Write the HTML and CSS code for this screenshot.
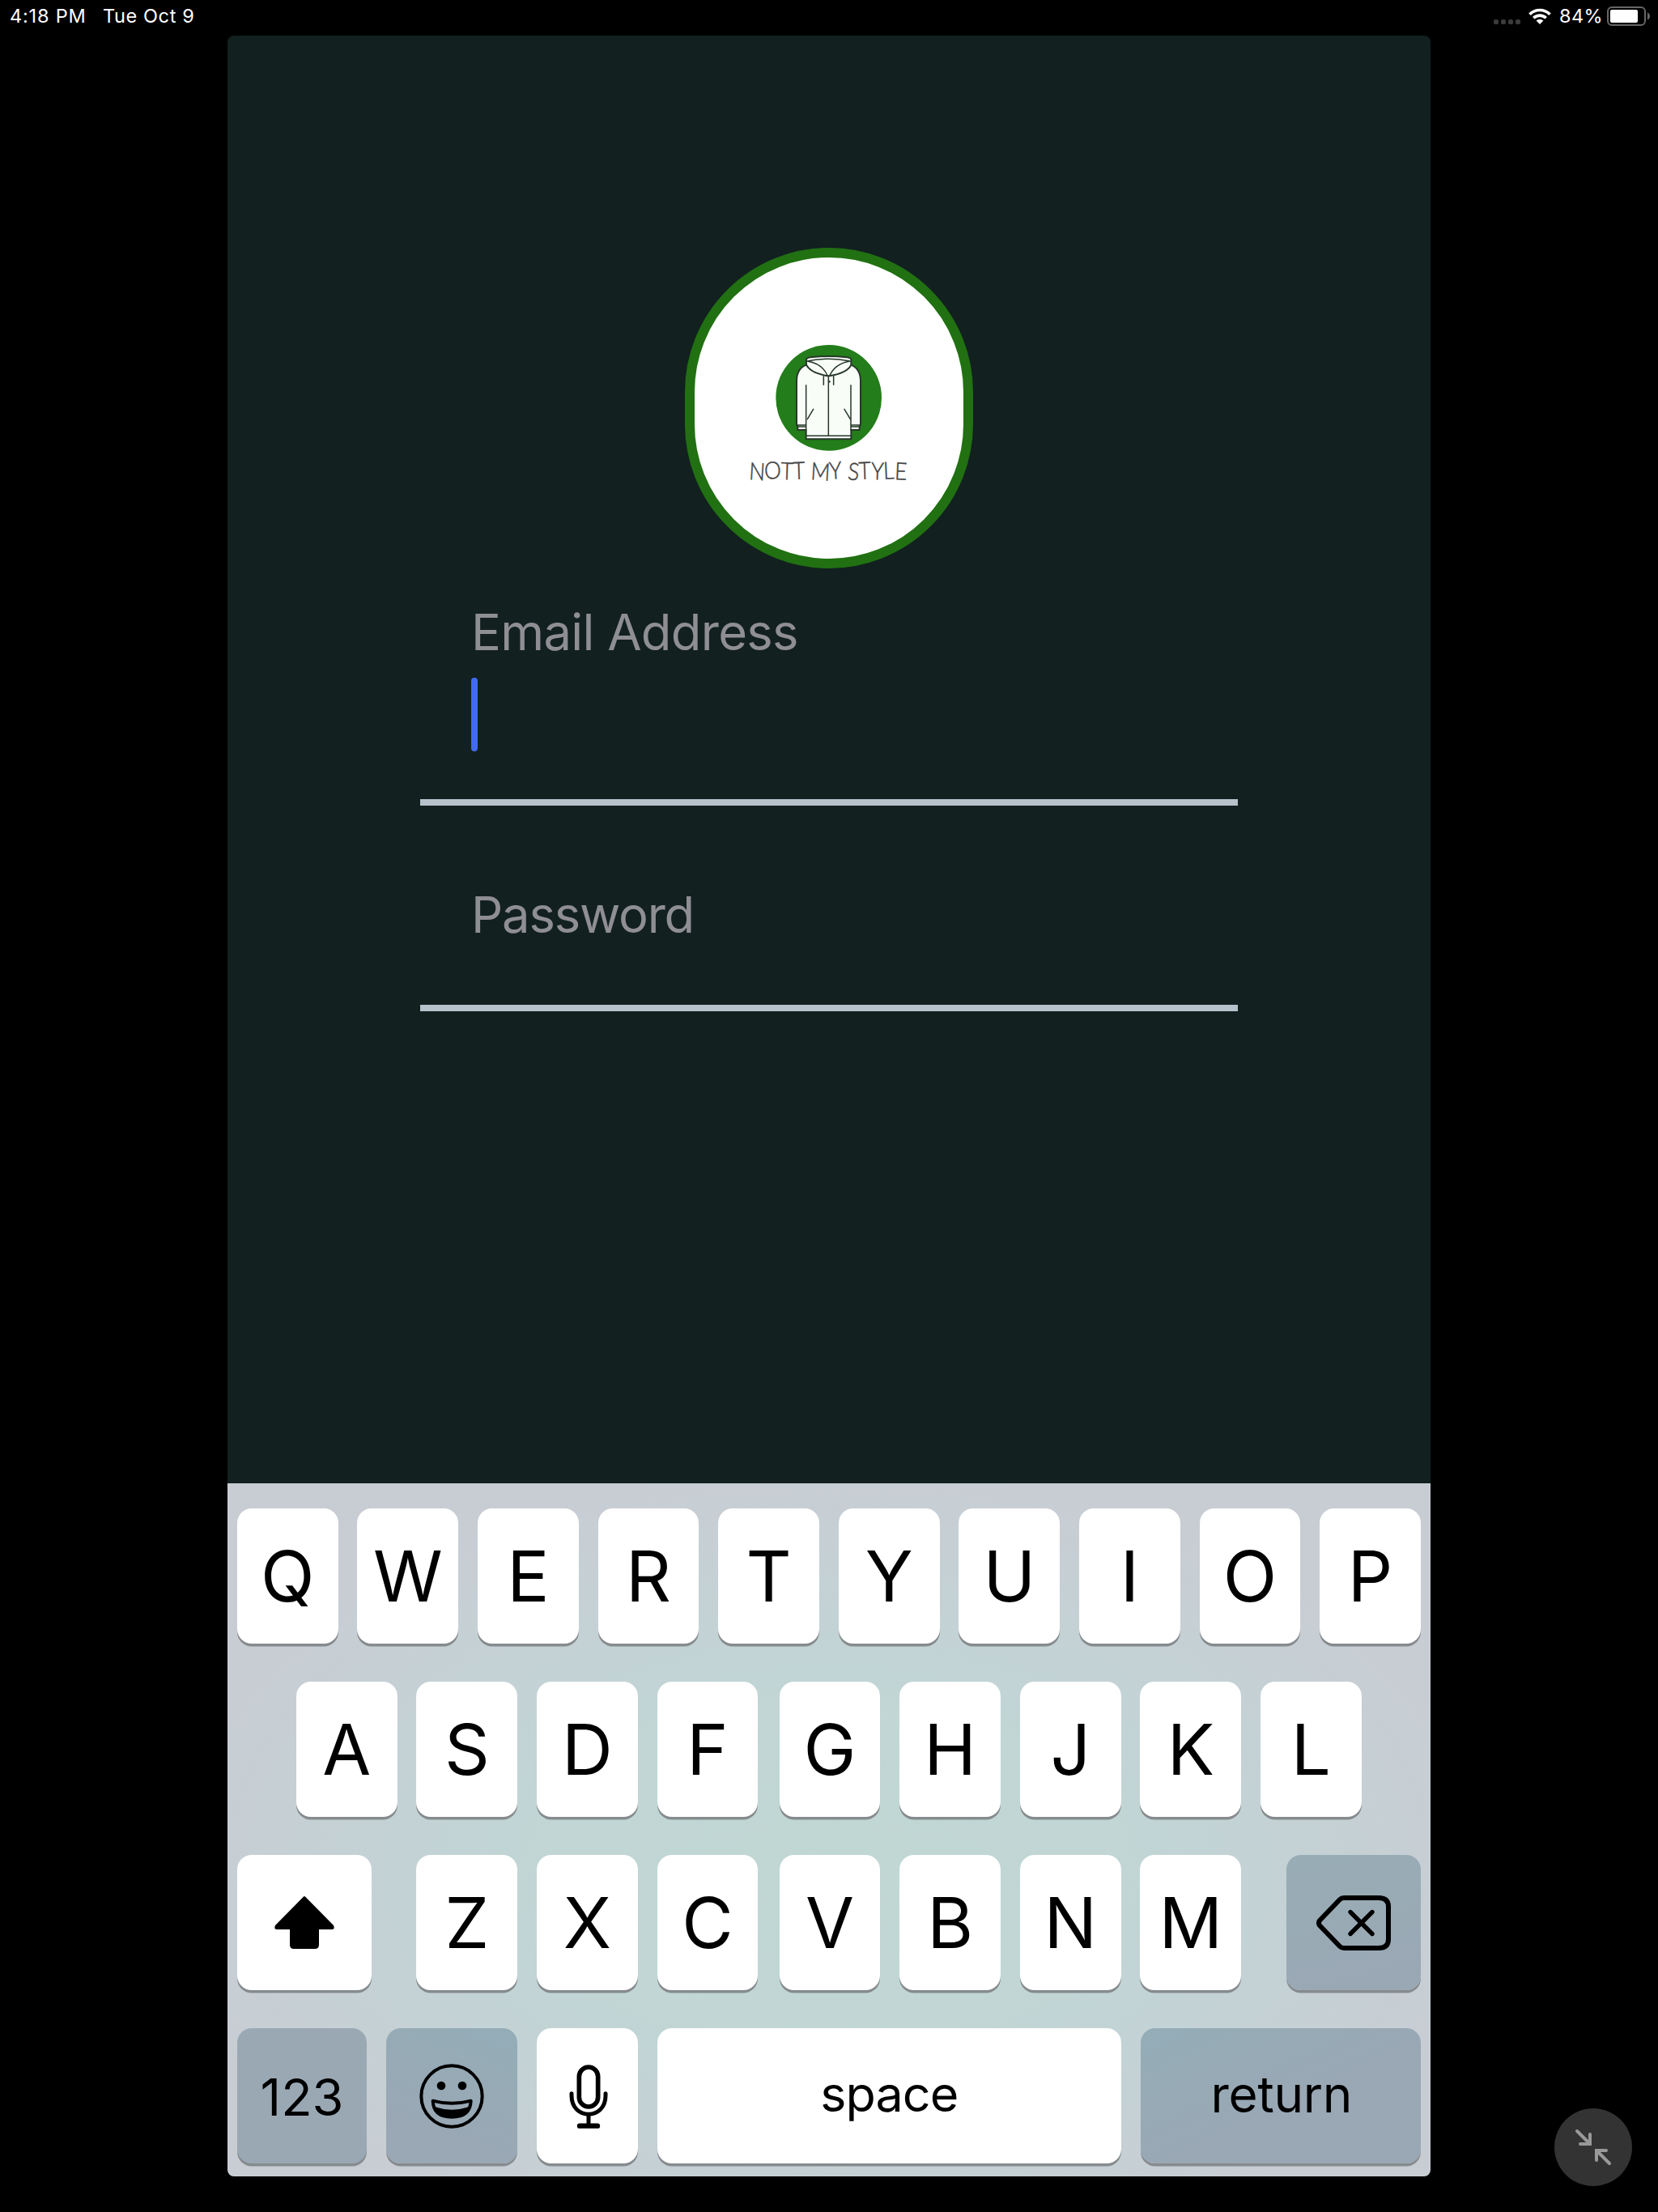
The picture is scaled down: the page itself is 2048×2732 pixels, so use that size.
FILE: index.html
```html
<!DOCTYPE html>
<html lang="en">
<head>
<meta charset="utf-8">
<title>Nott My Style</title>
<link rel="stylesheet" href="styles.css">
</head>
<body>
<header class="status">
  <span class="time">4:18 PM</span>
  <span class="date">Tue Oct 9</span>
  <svg class="signal" viewBox="0 0 33 6" width="33" height="6"><rect width="6" height="6" rx="2"/><rect x="9" width="6" height="6" rx="2"/><rect x="18" width="6" height="6" rx="2"/><rect x="27" width="6" height="6" rx="2"/></svg>
  <svg class="wifi" viewBox="0 0 28 20" width="28" height="20">
    <path d="M1.5 7.7A17.6 17.6 0 0 1 26.500 7.700M6.300 12.300A10.900 10.900 0 0 1 21.700 12.300" fill="none" stroke="#fff" stroke-width="3.700"/>
    <path d="M14 20 9.600 15.500A6.200 6.200 0 0 1 18.400 15.500Z" fill="#fff"/>
  </svg>
  <span class="percent">84%</span>
  <svg class="battery" viewBox="0 0 56 26" width="56" height="26">
    <rect x="2" y="2" width="46" height="22" rx="5" fill="none" stroke="#666" stroke-width="2"/>
    <rect x="5" y="5" width="34" height="16" rx="2" fill="#fff"/>
    <path d="M51 8.500q3 1.500 3 4.500t-3 4.500z" fill="#666"/>
  </svg>
</header>

<main class="app">
  <section class="login">
    <div class="logo">
      <svg viewBox="78 48 1068 1188" width="356" height="396">
        <circle cx="611" cy="604" r="196" fill="#237d1a"/>
        <g transform="translate(330 360)" fill="#f9fdf8" stroke="#27372a" stroke-width="6" stroke-linejoin="round" stroke-linecap="round">
          <path d="M198 122Q162 136 162 182V345L166 348V363H197V397H364V363H395V348L399 345V182Q399 136 363 122Z"/>
          <path d="M197 197V363M363 197V363M164 345H196M366 345H398M198 385H363M168 351H196M366 351H394" fill="none" stroke-width="4.500"/>
          <path d="M198 122V102Q200 96 214 94Q280 86 348 94Q362 96 364 102V122Q350 152 284 163H277Q213 152 198 122Z"/>
          <path d="M202 108Q280 92 360 108M202 108Q259 118 277 163M360 108Q303 118 284 163" fill="none" stroke-width="4.500"/>
          <path d="M280 165V385M262 164V196M299 164V196M224 286L202 323M339 286L361 323" fill="none" stroke-width="4.500"/>
          <circle cx="283" cy="184" r="4" fill="#27372a" stroke="none"/>
        </g>
        <text class="brand" x="314" y="906" textLength="586" lengthAdjust="spacingAndGlyphs" rotate="4 -3 2 -2 0 4 -4 0 6 -2 2 -3 3">NOTT MY STYLE</text>
      </svg>
    </div>
    <div class="field email">
      <span class="label">Email Address</span>
      <i class="caret"></i>
    </div>
    <div class="field password">
      <span class="label">Password</span>
    </div>
  </section>

  <section class="keyboard">
    <div class="row">
      <span class="key">Q</span><span class="key">W</span><span class="key">E</span><span class="key">R</span><span class="key">T</span><span class="key">Y</span><span class="key">U</span><span class="key">I</span><span class="key">O</span><span class="key">P</span>
    </div>
    <div class="row home">
      <span class="key">A</span><span class="key">S</span><span class="key">D</span><span class="key">F</span><span class="key mid">G</span><span class="key">H</span><span class="key">J</span><span class="key">K</span><span class="key">L</span>
    </div>
    <div class="row lower">
      <span class="key shift"><svg viewBox="0 0 74 65" width="74" height="65"><path d="M37 0Q38 0 39 1.500L73 36Q75 41 71 41H55V60Q55 65 50 65H24Q19 65 19 60V41H3Q-1 41 1 36L35 1.500Q36 0 37 0Z"/></svg></span>
      <span class="key">Z</span><span class="key">X</span><span class="key">C</span><span class="key mid">V</span><span class="key">B</span><span class="key">N</span><span class="key">M</span>
      <span class="key dark delete"><svg viewBox="0 0 92 68" width="92" height="68" fill="none" stroke="#000" stroke-linecap="round" stroke-linejoin="round"><path d="M34 3H77Q89 3 89 14V54Q89 65 77 65H34Q31 65 29 63L4 37Q2 34 4 31L29 5Q31 3 34 3Z" stroke-width="6"/><path d="M42 20.500 69 47.500M69 20.500 42 47.500" stroke-width="5.400"/></svg></span>
    </div>
    <div class="row bottom">
      <span class="key dark numbers">123</span>
      <span class="key dark emoji"><svg viewBox="0 0 240 240" width="80" height="80"><circle cx="120" cy="120" r="113" fill="none" stroke="#000" stroke-width="12"/><circle cx="81" cy="81" r="16"/><circle cx="159" cy="81" r="16"/><path d="M50 137Q120 156 191 137Q189 197 120 197Q52 197 50 137Z" fill="none" stroke="#000" stroke-width="12" stroke-linejoin="round"/><path d="M56 159Q120 181 185 159Q176 199 120 200Q65 199 56 159Z"/></svg></span>
      <span class="key mic"><svg viewBox="0 0 144 240" width="48" height="80" fill="none" stroke="#000" stroke-linecap="round"><rect x="37" y="12" width="70" height="147" rx="35" stroke-width="17"/><path d="M9 110V118C9 210 135 210 135 118V110" stroke-width="15"/><path d="M72 190V228" stroke-width="15" stroke-linecap="butt"/><path d="M39 230H105" stroke-width="19"/></svg></span>
      <span class="key word space">space</span>
      <span class="key dark word return">return</span>
    </div>
  </section>
</main>

<div class="shrink">
  <svg viewBox="0 0 96 96" width="96" height="96" fill="none" stroke="#999" stroke-width="4" stroke-linecap="round"><path d="M28 28 43.500 43.500M44 32V44H32M68 68 52.500 52.500M64 52H52V64"/></svg>
</div>
</body>
</html>
```
FILE: styles.css
```css
* { box-sizing: border-box; }

body {
  margin: 0;
  width: 2048px;
  height: 2732px;
  overflow: hidden;
  background: #000;
  color: #000;
  font-family: Inter, "Liberation Sans", sans-serif;
}

svg { display: block; flex: none; }

/* Status bar */
.status {
  display: flex;
  align-items: flex-start;
  height: 44px;
  padding: 8px 8px 0 12px;
  color: #fff;
  font-size: 23.500px;
  line-height: 24px;
  white-space: nowrap;
}
.time { width: 115px; letter-spacing: .8px; }
.date { letter-spacing: .6px; }
.signal { margin: 16px 10px 0 auto; fill: #3b3b3b; }
.wifi { margin: 2px 10px 0 0; }
.percent { width: 58px; letter-spacing: .4px; }
.battery { margin-top: -1px; }

/* App window */
.app {
  display: flex;
  flex-direction: column;
  width: 1486px;
  height: 2644px;
  margin: 0 auto;
  overflow: hidden;
  border-radius: 8px;
  background: #122020;
}
.login {
  display: flex;
  flex-direction: column;
  align-items: center;
  height: 1788px;
  padding-top: 262px;
}
.logo {
  width: 356px;
  height: 396px;
  border: 12px solid #217112;
  border-radius: 178px;
  background: #fff;
}
.logo svg { margin: -12px; }
.brand {
  font-family: Lato, sans-serif;
  font-weight: 300;
  font-size: 89px;
  fill: #444;
  stroke: #444;
  stroke-width: 1.500px;
}
.field {
  display: flex;
  flex-direction: column;
  align-items: flex-start;
  width: 1010px;
  padding-left: 63px;
  border-bottom: 8px solid #b7c2ca;
  color: #8e8e93;
  font-size: 61.500px;
  line-height: 62px;
}
.email { height: 293px; padding-top: 48px; letter-spacing: -.72px; }
.password { height: 254px; padding-top: 104px; letter-spacing: -1.2px; }
.caret {
  width: 8px;
  height: 91px;
  margin-top: 25px;
  border-radius: 4px;
  background: #426bf2;
}

/* Keyboard */
.keyboard {
  display: flex;
  flex-direction: column;
  gap: 47.300px;
  height: 856px;
  padding: 31.200px 11.800px 0;
  background: radial-gradient(ellipse 56% 58% at 50% 56%, #c0d7d3 0%, #c1d6d5 40%, #c4d1d5 72%, #c8cdd4 100%);
}
.row {
  display: flex;
  gap: 23.800px;
  height: 166.700px;
}
.home { padding-left: 73px; }
.key {
  display: flex;
  flex: none;
  align-items: center;
  justify-content: center;
  width: 124.800px;
  height: 167px;
  border-radius: 18px;
  background: #fff;
  box-shadow: 0 3.500px 0 #868b8e;
  font-size: 87px;
  line-height: 1;
}
.mid { margin-left: 2.500px; }
.shift { width: 166.500px; margin-right: 31.300px; }
.dark { background: linear-gradient(165deg, #98adb5, #9aa7b4); }
.delete { width: 166.500px; margin-left: 31.500px; }
.numbers { width: 160.500px; font-size: 63px; padding-top: 3px; background: #9aa8b4; }
.emoji { width: 162.300px; background: linear-gradient(200deg, #93adb7, #9aa7b4 80%); }
.mic { padding-left: 2px; }
.word { font-size: 62px; padding-bottom: 4px; }
.space { width: 573px; font-size: 61px; letter-spacing: -.9px; }
.return { width: 346.500px; padding-left: 2px; letter-spacing: -.3px; background: linear-gradient(155deg, #93adb7, #9aa7b4 60%); }

/* Scale toggle floating over the corner */
.shrink {
  position: absolute;
  left: 1920px;
  top: 2604px;
  width: 96px;
  height: 96px;
  border-radius: 50%;
  background: #333;
}
```
